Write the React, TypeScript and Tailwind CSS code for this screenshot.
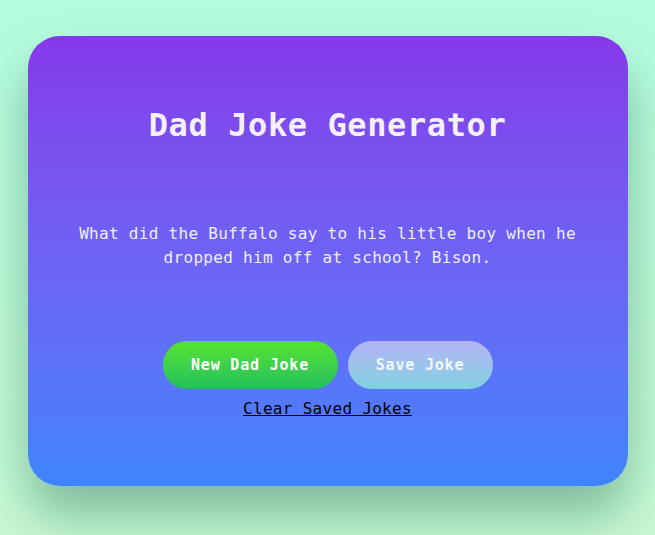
import React from "react";

export default function App() {
  return (
    <div
      className="w-[655px] h-[535px] bg-gradient-to-b from-[#b3fcde] to-[#c8fad3] flex justify-center pt-[36px]"
      style={{ fontFamily: '"DejaVu Sans Mono", "Liberation Mono", monospace' }}
    >
      <div className="w-[600px] h-[450px] rounded-[32px] bg-gradient-to-b from-[#8538ea] to-[#3d84fd] shadow-[0_30px_50px_rgba(40,110,90,0.45)] flex flex-col items-center">
        <h1 className="mt-[69px] text-[32px] leading-[40px] font-bold text-[#f3f1ff] tracking-[0.6px]">
          Dad Joke Generator
        </h1>
        <p className="mt-[77px] w-[520px] text-center text-[16px] leading-[24px] text-[#eef0ff] tracking-[0.3px]">
          What did the Buffalo say to his little boy when he dropped him off at school? Bison.
        </p>
        <div className="mt-[71px] flex gap-[10px]">
          <button className="w-[175px] h-[48px] rounded-full bg-gradient-to-b from-[#56e328] to-[#20c05c] text-white font-bold text-[15px] tracking-[0.8px]">
            New Dad Joke
          </button>
          <button className="w-[145px] h-[48px] rounded-full bg-gradient-to-b from-[#b4b2f8] to-[#7ed2de] text-[#f3f6ff] font-bold text-[15px] tracking-[0.8px]">
            Save Joke
          </button>
        </div>
        <button className="mt-[8px] text-[16px] leading-[24px] text-black underline tracking-[0.3px]">
          Clear Saved Jokes
        </button>
      </div>
    </div>
  );
}
